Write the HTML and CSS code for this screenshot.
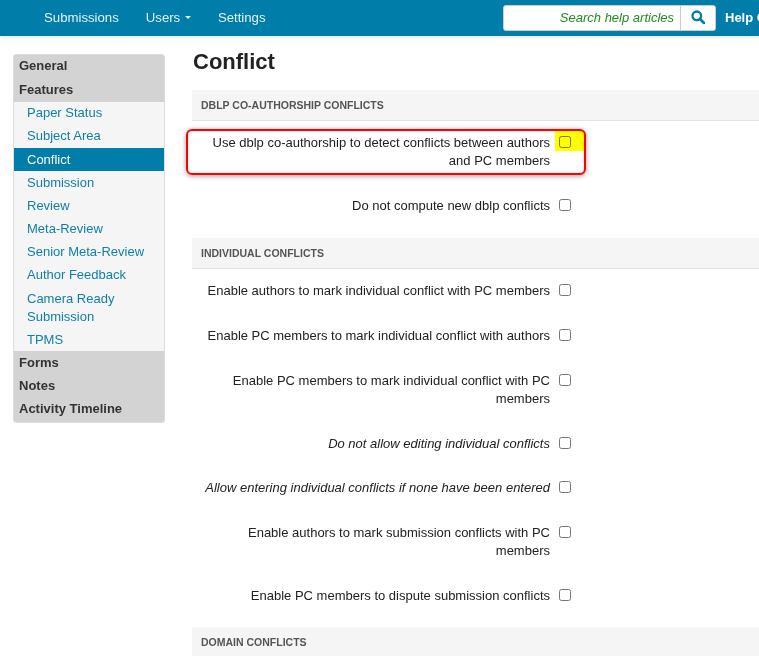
FILE: index.html
```html
<!DOCTYPE html>
<html lang="en">
<head>
<meta charset="utf-8">
<title>Conflict</title>
<link rel="stylesheet" href="styles.css">
</head>
<body>
<header class="topbar">
  <nav class="topnav">
    <a href="#">Submissions</a>
    <a href="#">Users <span class="caret"></span></a>
    <a href="#">Settings</a>
  </nav>
  <form class="search">
    <input class="search-input" type="text" placeholder="Search help articles">
    <button class="search-btn" type="button" aria-label="Search">
      <svg width="14" height="14" viewBox="0 0 14 14"><circle cx="5.8" cy="5.8" r="4.3" fill="none" stroke="#007da8" stroke-width="2.3"/><path d="M9 9l4 4" stroke="#007da8" stroke-width="2.6" stroke-linecap="round"/></svg>
    </button>
  </form>
  <a class="help" href="#">Help Center</a>
</header>
<div class="page">
  <aside class="sidebar">
    <a class="group" href="#">General</a>
    <a class="group" href="#">Features</a>
    <a class="sub" href="#">Paper Status</a>
    <a class="sub" href="#">Subject Area</a>
    <a class="sub active" href="#">Conflict</a>
    <a class="sub" href="#">Submission</a>
    <a class="sub" href="#">Review</a>
    <a class="sub" href="#">Meta-Review</a>
    <a class="sub" href="#">Senior Meta-Review</a>
    <a class="sub" href="#">Author Feedback</a>
    <a class="sub" href="#">Camera Ready Submission</a>
    <a class="sub" href="#">TPMS</a>
    <a class="group" href="#">Forms</a>
    <a class="group" href="#">Notes</a>
    <a class="group" href="#">Activity Timeline</a>
  </aside>
  <main class="main">
    <h1 class="title">Conflict</h1>
    <section class="panel">
      <h2 class="panel-head">DBLP Co-Authorship Conflicts</h2>
      <div class="rows">
        <label class="row"><span class="row-label">Use dblp co-authorship to detect conflicts between authors and PC members</span><span class="box"></span>
          <span class="highlight"></span><span class="callout"></span></label>
        <label class="row"><span class="row-label">Do not compute new dblp conflicts</span><span class="box"></span></label>
      </div>
    </section>
    <section class="panel">
      <h2 class="panel-head">Individual Conflicts</h2>
      <div class="rows rows-tight">
        <label class="row"><span class="row-label">Enable authors to mark individual conflict with PC members</span><span class="box"></span></label>
        <label class="row"><span class="row-label">Enable PC members to mark individual conflict with authors</span><span class="box"></span></label>
        <label class="row"><span class="row-label">Enable PC members to mark individual conflict with PC members</span><span class="box"></span></label>
        <label class="row"><span class="row-label em">Do not allow editing individual conflicts</span><span class="box"></span></label>
        <label class="row"><span class="row-label em">Allow entering individual conflicts if none have been entered</span><span class="box"></span></label>
        <label class="row"><span class="row-label">Enable authors to mark submission conflicts with PC members</span><span class="box"></span></label>
        <label class="row"><span class="row-label">Enable PC members to dispute submission conflicts</span><span class="box"></span></label>
      </div>
    </section>
    <section class="panel">
      <h2 class="panel-head">Domain Conflicts</h2>
    </section>
  </main>
</div>
</body>
</html>
```
FILE: styles.css
```css
* { box-sizing: border-box; }
html, body { margin: 0; height: 656px; overflow: hidden; background: #fff; }
body { font: 13px/18px "Liberation Sans", Arial, sans-serif; color: #222; }
a { text-decoration: none; }

.topbar { display: flex; align-items: center; height: 36px; width: 900px; background: #007da8; box-shadow: 0 1px 4px rgba(0,0,0,.12); color: #fff; }
.topnav { display: flex; gap: 27px; padding-left: 44px; width: 503px; font-size: 13.2px; }
.topnav a { color: #e6f1f5; }
.caret { display: inline-block; width: 0; height: 0; margin: 0 0 2px 1px; vertical-align: middle; border-top: 3px solid #e6f1f5; border-left: 3px solid transparent; border-right: 3px solid transparent; }
.search { display: flex; width: 213px; height: 26px; border: 1px solid #ccc; border-radius: 3px; background: #fff; overflow: hidden; }
.search-input { flex: 1; min-width: 0; border: 0; padding: 0 6px 2px 0; font: italic 13px "Liberation Sans", Arial, sans-serif; text-align: right; outline: 0; }
.search-input::placeholder { color: #228b22; opacity: 1; }
.search-btn { display: flex; align-items: center; justify-content: center; width: 35px; padding: 0 0 2px; border: 0; border-left: 1px solid #ccc; background: #fff; }
.help { margin-left: 9px; color: #fff; font-weight: bold; }

.page { display: flex; align-items: flex-start; padding: 18px 0 0 13px; width: 1000px; }
.sidebar { display: flex; flex-direction: column; flex: none; width: 152px; border: 1px solid #ddd; border-radius: 3px; background: #f5f5f5; overflow: hidden; }
.sidebar a { padding: 2.6px 5px 2.6px 13px; }
.sidebar .group { padding-left: 5px; background: #d3d3d3; color: #333; font-weight: bold; }
.sidebar .group:first-child { padding-top: 2px; padding-bottom: 3.4px; }
.sidebar .group:last-child { padding-bottom: 3.2px; }
.sidebar .sub { color: #107fa8; }
.sidebar .active { background: #007da8; color: #fff; }

.main { flex: none; width: 800px; margin-left: 27px; }
.title { margin: -8px 0 13px 1px; font-size: 22px; line-height: 31px; font-weight: bold; color: #222; }
.panel-head { margin: 0; height: 31px; padding: 0 9px; background: #f5f5f5; border-bottom: 1px solid #e3e3e3; color: #555; font-size: 10.5px; line-height: 30px; font-weight: bold; text-transform: uppercase; }
.rows { display: flex; flex-direction: column; gap: 26.9px; padding: 13px 0 23px; }
.rows-tight { padding-bottom: 21.7px; }
.row { position: relative; display: flex; align-items: flex-start; width: 379px; }
.row-label { flex: 1; padding-left: 8px; text-align: right; }
.em { font-style: italic; padding-left: 0; }
.box { flex: none; width: 12px; height: 12px; margin: 2px 0 0 9px; border: 1px solid #767676; border-radius: 2.5px; background: #fff; }
.highlight { position: absolute; left: 363px; top: -3px; width: 29px; height: 20px; background: #ff0; mix-blend-mode: multiply; }
.callout { position: absolute; left: -6px; top: -5px; width: 400px; height: 46px; border: 2px solid #f00; border-radius: 6px; box-shadow: 0 1px 5px rgba(0,0,0,.4), inset 0 0 3px rgba(0,0,0,.15); }
```
